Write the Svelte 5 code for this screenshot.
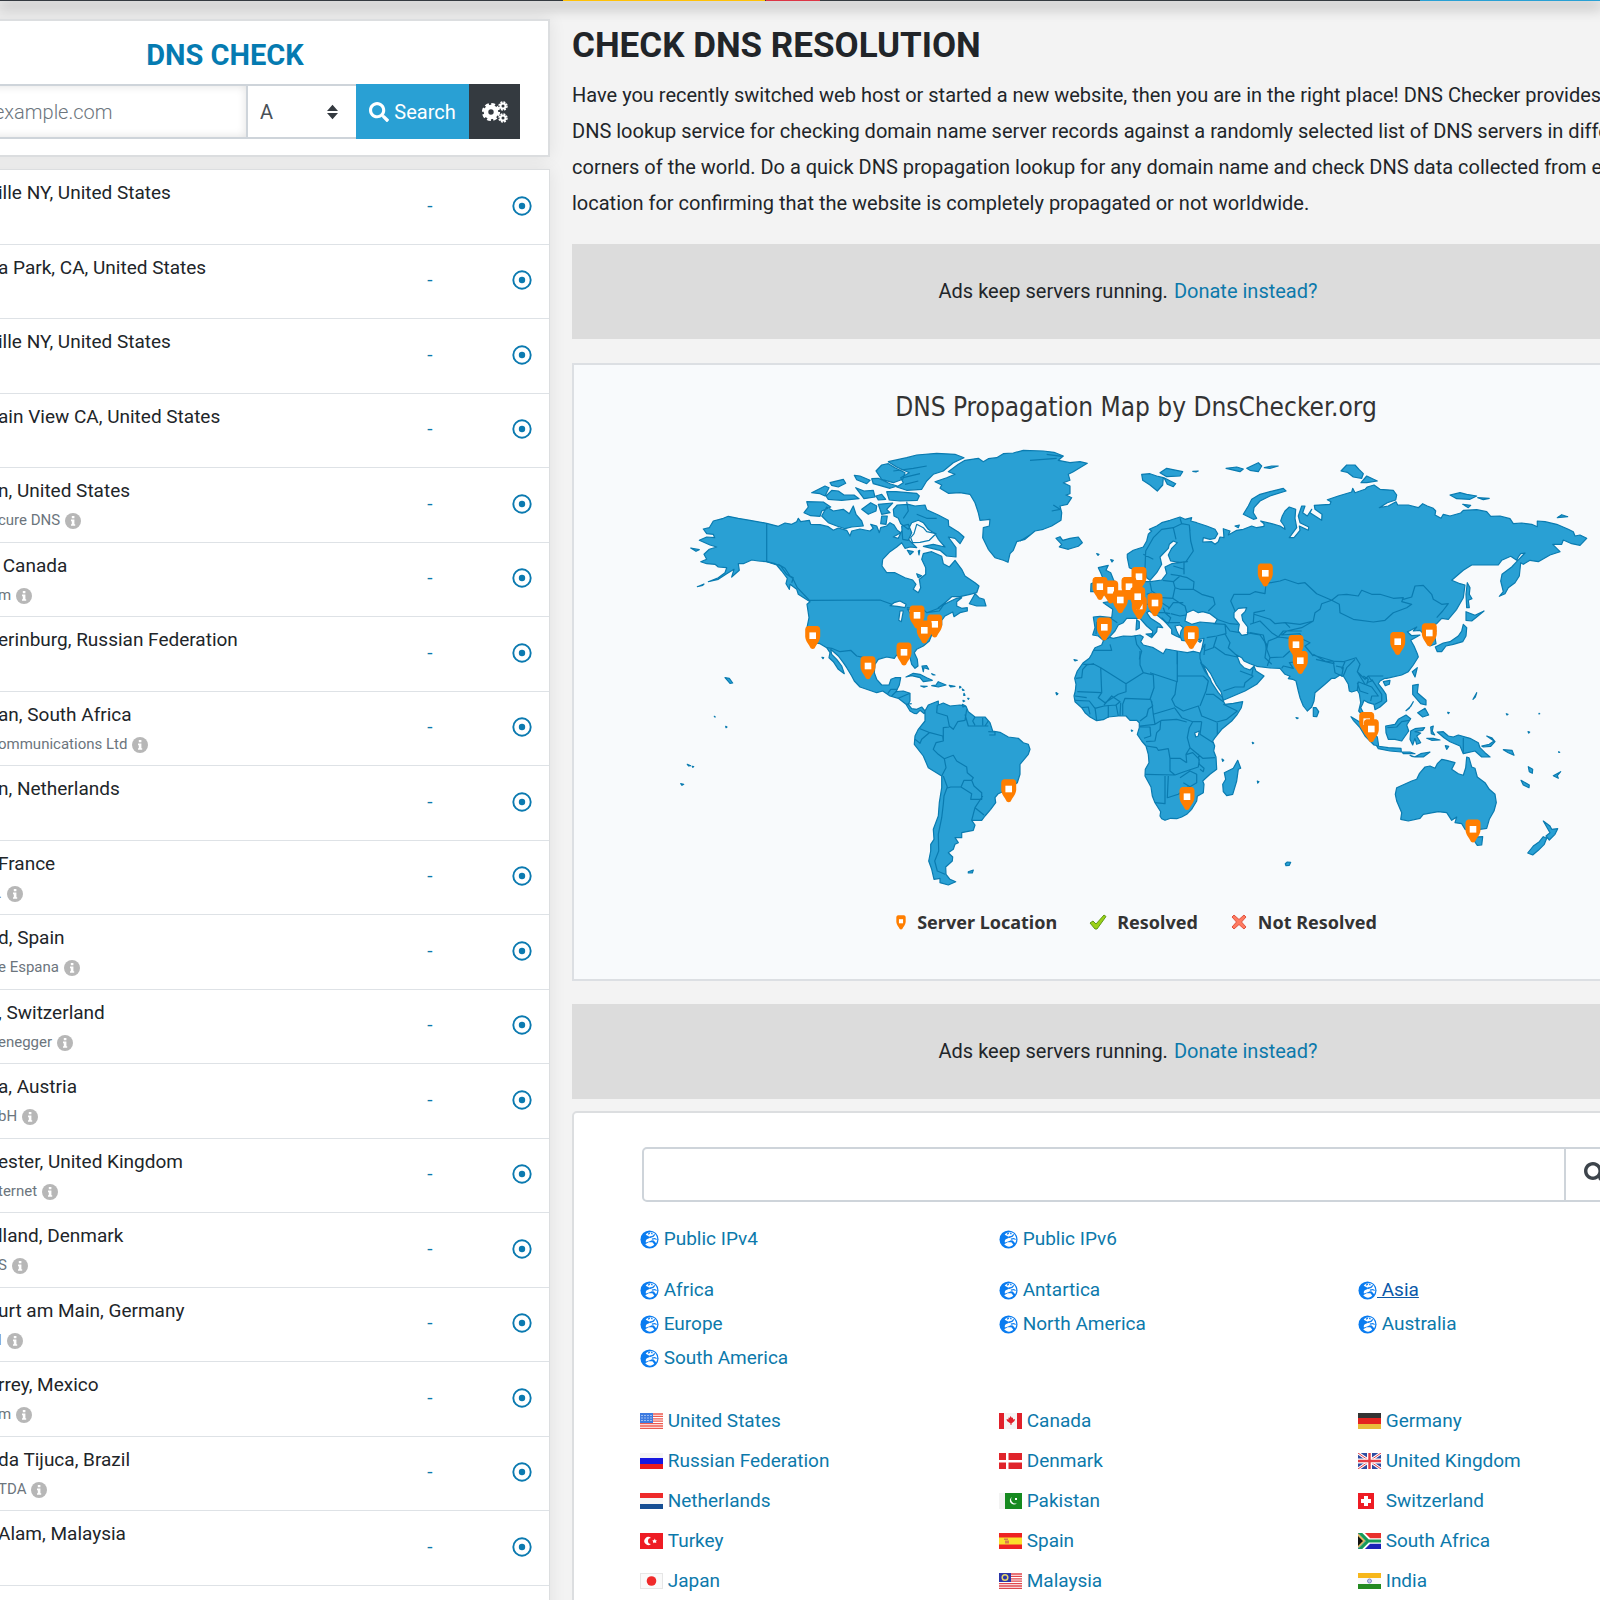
<script>
  const servers = [
    ['ille NY, United States', ''],
    ['a Park, CA, United States', ''],
    ['ille NY, United States', ''],
    ['ain View CA, United States', ''],
    ['n, United States', 'cure DNS'],
    ['\u00a0Canada', 'm'],
    ['erinburg, Russian Federation', ''],
    ['an, South Africa', 'ommunications Ltd'],
    ['n, Netherlands', ''],
    ['France', '.'],
    ['d, Spain', 'e Espana'],
    [', Switzerland', 'enegger'],
    ['a, Austria', 'bH'],
    ['ester, United Kingdom', 'ternet'],
    ['lland, Denmark', 'S'],
    ['urt am Main, Germany', 'l'],
    ['rrey, Mexico', 'm'],
    ['da Tijuca, Brazil', 'TDA'],
    ['Alam, Malaysia', '']
  ];

  const publicLists = ['Public IPv4', 'Public IPv6'];
  const regions = ['Africa', 'Antartica', 'Asia', 'Europe', 'North America', 'Australia', 'South America'];
  const countries = [
    ['United States', 'us'], ['Canada', 'ca'], ['Germany', 'de'],
    ['Russian Federation', 'ru'], ['Denmark', 'dk'], ['United Kingdom', 'gb'],
    ['Netherlands', 'nl'], ['Pakistan', 'pk'], ['Switzerland', 'ch'],
    ['Turkey', 'tr'], ['Spain', 'es'], ['South Africa', 'za'],
    ['Japan', 'jp'], ['Malaysia', 'my'], ['India', 'in']
  ];

  // The map is charted on six sheets, three units to one map unit; each has its own origin.
  const sheets = { A: [660, 430], B: [980, 430], C: [1250, 430], D: [660, 660], E: [1040, 650], F: [1300, 650] };

  // Turns "A 10,20 30,40 | B 5,5" into path data; a sheet letter holds until the next one.
  function chart(text, end = '') {
    let origin = sheets.A;
    let out = '';
    let command = 'M';
    for (const word of text.trim().split(/\s+/)) {
      if (sheets[word]) {
        origin = sheets[word];
      } else if (word === '|') {
        out += end;
        command = 'M';
      } else {
        const [x, y] = word.split(',').map(Number);
        out += command + (origin[0] + x / 3).toFixed(1) + ',' + (origin[1] + y / 3).toFixed(1);
        command = 'L';
      }
    }
    return out + end;
  }
  const outline = (text) => chart(text, 'Z');

  const land = [
    // Africa
    `B 370,630 385,618 400,622 430,615 455,616 480,612 490,618 482,632 490,642 520,650 550,668 558,654 592,660 622,665 640,661 660,666 665,690 685,735
     E 482,35 495,62 510,82 515,95 535,125 548,140 550,150 555,160 580,157 608,152 604,170 592,190 575,210 545,235 525,260 518,270 524,285 521,300 528,318 530,355 510,370 488,390 492,400 490,425 472,436 470,450 455,475 440,490 425,498 410,503 392,502 375,508 365,503 360,495 362,482 345,455 337,435 333,408 315,375 316,355 327,335 325,310 318,285 305,270 292,250 298,230 298,215 290,208 270,208 258,195 235,195 205,198 190,206 170,209 150,198 135,185 125,170 105,152 102,135 106,120 108,100 104,82 112,60 130,35 148,22 155,10
     B 338,662 345,650 365,642`,
    // Eurasia
    `B 442,380 442,370 460,358 490,348 500,330 505,310 515,300 508,295 530,285 545,275 570,268 600,258 615,265 635,260 632,270 650,275 680,285 705,295 713,308 705,322 690,325 670,320 668,333 695,332 705,340 715,332 720,318 732,320 730,293 750,300 745,312 770,298 790,295 815,285 830,290 852,286 852,278 842,270 875,278 900,285
     C 105,295 103,285 92,270 97,255 105,240 118,228 137,235 135,262 140,290 118,320 132,320 150,298 148,285 175,298 176,288 150,275 145,255 155,225 165,225 158,245 172,255 185,235 180,245 215,268 216,250 195,235 193,223 240,220 243,212 232,206 265,195 305,183 308,172 315,185 345,175 352,168 372,162 390,175 430,178 440,192 437,207 412,215 388,230 415,225 438,212 443,222 475,222 505,230 518,218 532,225 550,232 557,240 555,252 573,262 580,250 600,255 632,246 640,238 680,236 710,242 722,256 750,255 780,263 790,278 815,276 845,280 862,287 862,270 885,272 920,280 955,295 970,302 975,315 990,312 1010,322 990,343 965,338 940,327 935,340 908,340 930,362 900,372 865,392 840,388 820,400 812,395 808,435 795,455 775,470 765,488 748,496 760,482 752,450 756,430 785,408 800,392 825,366 812,368 805,378 800,388 782,376 755,388 745,402 715,402 665,402 640,418 605,448 630,458 645,462 640,500 620,535 595,565 575,562 560,578 545,585 540,598 555,620 558,638 540,645 528,632 520,608 510,598 490,600 500,588 478,600 472,602 485,614 510,612 482,628 492,645 502,668 505,678 490,702 475,722 455,732 410,742
     F 255,82 240,90 235,98 248,115 258,130 260,150 240,168 225,176 222,160 205,155 192,148 188,158 182,170 190,185 205,200 222,222 210,220 192,198 176,180 182,155 178,128 172,118 155,123 148,120 145,100 132,78 120,72 105,82 95,82 75,100 45,125 42,150 35,168 22,180 10,165 0,140
     E 775,120 768,90 758,85 745,83 750,76 735,70 720,52 690,51 650,46 630,38 612,30 605,20 590,12 600,38 612,50 630,57 642,46 648,60 672,75 650,100 615,120 580,135 550,148 543,122 528,100 512,68 500,52 485,38 480,22
     B 660,668 665,655 672,622 658,625 640,632 620,630 605,628 600,615 603,600 610,590 600,582 585,585 590,600 600,620 588,615 575,608 575,595 560,578 548,566 535,555 520,548 508,540 500,545 512,562 540,580 548,590 532,588 530,602 515,620 518,600 500,585 480,562 465,562 440,562 430,575 415,582 405,600 385,622 370,628 355,615 338,612 345,590 340,558 360,556 395,560 398,535 370,515 388,512 395,505 415,500 430,485 450,475 458,460 462,438 475,418 488,430 485,452 512,452 545,447 560,428 555,408 575,398 622,392 600,394 572,390 565,372 575,352 592,335 580,330 568,340 565,352 540,378 545,400 530,425 510,448 500,440 495,412 470,420 448,410`,
    // North and Central America
    `A 205,256 235,262 270,268 320,277 355,286 375,276 395,280 410,272 415,262 422,272 448,268 452,280 480,281 505,287 520,298 535,291 560,298 570,315 575,300 600,294 630,300 640,292 632,280 650,285 658,305 662,290 680,285 690,275 702,282 712,298 722,305 700,318 715,322 725,300 735,310 750,330 770,350 750,348 735,352 725,335 710,348 690,362 668,385 666,405 680,425 705,425 735,440 758,447 768,460 760,475 775,485 782,470 778,445 797,430 797,410 785,385 790,368 815,362 845,376 850,398 868,408 885,388 905,415 915,435 945,455 957,465 950,485 930,490 900,497 875,497 855,515 835,530 868,512 890,502 905,500 890,512 890,525 905,532 922,530 922,540 900,545 882,557 878,543 855,555 845,568 845,582 830,600 815,612 808,630 790,645 770,655 763,665 772,685 774,705 765,712 755,700 750,680 735,672 710,672 703,682 680,678 655,685 645,700 643,725 650,745 665,762 687,762 693,745
     D 705,50 722,50 718,72 708,92 730,90 750,97 750,120 745,130 755,143 770,145 785,138 795,150 793,158 780,148 770,158 762,157 750,150 738,130 715,112 690,105 668,90 650,95 600,78 583,60 575,45 560,20 550,5
     A 535,675 512,655 515,670 530,685 545,705 553,728 535,715 520,692 507,680 510,665 500,650 480,638 458,635 447,610 441,590 447,560 441,520 450,512 415,490 410,475 390,460 388,475 378,458 382,442 365,420 350,402 320,392 295,390 275,387 250,398 235,398 238,418 215,438 222,415 200,428 175,445 145,452 175,440 195,425 200,410 175,408 165,400 140,398 122,392 140,385 132,370 148,355 170,348 150,342 118,328 140,318 164,320 160,310 140,308 130,294 148,290 160,270 190,262`,
    // South America
    `D 795,150 805,132 835,120 835,132 850,126 870,135 900,132 918,136 925,152 945,168 975,168 990,185 998,210 1020,214 1045,228 1075,232 1090,245 1105,250 1110,265 1105,280 1080,310 1080,340 1072,365 1045,385 1015,398 1005,410 1007,425 992,445 975,465 965,478 935,478 945,492 940,508 905,515 905,530 885,530 895,545 885,550 880,565 865,575 878,588 877,600 857,618 858,640 870,655 887,662 865,672 840,665 840,652 822,655 815,625 806,600 812,570 812,550 822,535 820,505 835,465 838,425 845,380 845,345 805,320 790,285 763,250 765,225 775,205 795,180`,
    // Greenland
    `A 825,152 860,140 885,130 865,122 895,100 915,88 955,82 B 10,92 25,83 50,80 70,68 100,66 130,58 190,60 222,64 250,75 235,88 270,95 300,92 322,97 280,122 265,130 270,148 250,155 270,165 270,188 258,192 275,200 262,220 240,225 245,245 243,268 215,285 190,295 165,300 135,325 110,332 100,358 90,368 84,394 70,388 45,380 25,355 8,320 10,290 28,285 30,265 0,268 A 955,245 945,215 930,190 900,185 865,187 840,172 845,162`,
    // Canadian Arctic
    `A 440,212 490,213 512,228 485,240 480,256 452,254 432,245 445,228 | 500,228 520,240 550,235 568,248 580,225 588,250 605,270 610,285 575,288 555,293 530,285 505,275 485,255 | 605,235 632,215 650,225 648,240 625,250 | 655,220 698,216 680,235 690,245 665,250 | 665,255 682,255 678,280 662,278 | 700,235 712,222 745,220 765,225 795,222 800,236 835,252 865,268 866,285 895,303 912,318 900,338 885,322 865,318 888,350 888,378 860,375 840,358 790,346 820,340 855,348 835,325 825,308 805,295 790,275 775,268 755,275 745,295 722,278 715,262 702,255 | 725,285 745,280 755,305 745,328 728,325 | 680,182 708,182 770,187 778,195 772,208 720,210 688,207 | 648,120 665,102 685,98 705,110 735,125 728,145 700,155 665,145 | 685,92 740,80 770,72 830,67 885,70 912,80 880,95 850,120 820,130 800,150 785,175 740,178 710,168 730,155 722,140 748,125 710,108 | 583,133 600,135 630,148 620,158 590,146 | 635,143 655,142 690,158 712,165 690,172 640,158 | 455,185 495,165 507,170 495,195 480,188 | 510,155 550,145 557,157 535,168 515,163 | 498,195 515,178 535,180 552,192 582,192 597,203 545,208 505,205 | 587,170 612,180 640,178 645,198 612,203 | 648,195 665,190 677,205 655,207 | 742,358 760,362 750,371 | 775,360 779,358 777,372 | 770,428 785,434 775,440 | 945,488 957,500 972,505 978,525 950,525 928,518 | 92,351 118,356 108,361 | 112,467 132,459 128,463 | 195,740 208,742 218,756 210,757 | 486,679 491,680 489,683`,
    // Caribbean and Pacific islets
    `D 738,48 760,37 780,40 800,50 817,58 790,62 780,50 755,44 | 815,74 828,72 835,62 858,72 835,78 | 868,73 885,76 872,78 | 782,75 802,76 792,79 | 786,15 800,14 806,25 792,20 790,32 | 815,38 825,42 820,42 | 899,76 903,79 899,81 | 907,84 912,88 908,88 | 912,97 915,103 911,103 | 923,112 927,112 925,115 | 909,118 914,120 910,122 | 907,130 916,134 909,138 | 163,166 166,168 164,168 | 197,196 201,198 198,200 | 82,310 92,314 86,315 | 97,316 101,317 98,319 | 62,368 71,370 66,373 | 925,632 940,627 937,636 925,636 | 1188,95 1192,98 1190,101`,
    // North Atlantic and Arctic Ocean
    `B 228,322 240,317 248,328 270,322 295,318 307,335 295,346 265,355 238,348 245,340 | 355,410 385,403 378,418 392,425 400,445 410,465 412,485 375,494 385,482 370,475 382,460 368,440 362,425 | 333,458 352,450 358,470 352,482 332,482 | 350,368 357,370 354,373 | 392,386 400,388 396,393 | 485,130 510,128 530,135 550,140 548,162 532,180 510,162 488,148 | 540,125 560,112 608,122 600,135 560,137 | 552,140 587,158 580,167 562,160 | 638,121 655,120 648,123 | 738,112 770,108 790,114 780,122 | 800,112 835,95 845,105 835,122 810,118 | 853,110 875,105 895,105 870,112 | 790,250 805,225 815,205 840,190 C 60,182 100,172 108,180 60,195 30,210 12,230 10,245 20,262 10,265 | 273,120 290,102 315,102 327,115 340,128 335,142 310,138 292,124 | 333,155 350,135 382,150 350,155 | 600,192 630,185 650,190 680,195 660,205 620,203 | 683,200 718,202 700,206 | 638,220 662,223 655,230 | 922,260 935,251 953,257 | B 765,285 778,282 775,290 | 470,566 478,572 478,592 468,597 | 498,609 518,608 512,618 | 282,686 292,688 285,690 | 655,630 665,628 660,634`,
    // Japan, Sakhalin and the western Pacific
    `C 652,455 660,470 658,490 666,503 655,508 658,530 650,530 648,490 | 648,542 675,553 702,540 680,558 665,570 648,568 | 640,580 650,590 648,615 638,632 610,640 588,645 575,662 562,662 556,648 580,636 600,632 625,615 635,600 | 487,722 502,710 495,738 | F 250,92 270,88 268,100 256,104 | 40,170 48,170 56,182 50,197 40,196`,
    // South-east Asia
    `F 153,197 178,212 205,235 232,258 236,285 222,282 195,255 180,230 160,208 | 230,285 265,290 303,292 304,303 270,300 235,293 | 306,303 330,303 345,308 310,308 | 345,317 362,308 390,303 370,318 | 330,313 345,318 335,316 | 257,225 285,220 295,205 318,192 332,203 320,222 326,240 305,270 285,265 265,265 258,245 | 332,240 345,233 374,230 368,238 345,242 362,246 350,255 362,275 350,280 345,262 338,282 330,265 | 392,228 400,225 397,240 404,252 394,248 | 380,262 400,262 420,267 395,268 | 412,243 430,242 445,255 460,258 475,252 510,262 535,275 540,290 555,305 570,318 545,318 525,300 490,308 480,285 450,272 432,260 | 545,285 568,280 582,270 560,255 575,260 585,272 572,286 550,288 | 436,284 446,286 440,295 | 610,296 636,298 642,313 625,305 | 685,347 698,355 697,367 688,362 | 663,388 688,402 687,410 670,402 | 760,374 782,362 772,374 775,382 | 338,103 355,100 352,125 378,148 378,162 362,158 338,130 | 353,185 375,172 386,192 368,198 | 340,152 328,172 318,179 333,165 | 443,184 448,185 445,188 | 619,188 624,190 621,192 | 684,242 689,243 686,246 | 519,145 530,125 526,138 | 717,187 719,188 717,189 | 776,302 779,304 776,304`,
    // Australia and New Zealand
    `F 290,410 335,390 350,385 358,368 375,348 390,345 405,352 412,338 425,325 440,328 465,335 455,355 475,368 490,373 497,350 500,318 507,320 515,348 525,352 532,378 555,395 568,415 585,430 589,455 582,480 568,505 560,532 540,535 515,540 495,535 485,518 465,515 470,498 455,508 440,485 415,482 370,490 360,502 325,510 302,505 305,485 290,450 286,430 | 525,558 548,557 545,582 532,583 523,570 | 730,510 750,525 755,535 773,533 765,550 748,567 738,555 750,545 | 730,557 740,562 733,580 715,598 698,612 683,606 700,585 718,572`,
    // Madagascar and the Indian Ocean
    `E 593,328 602,352 595,355 590,390 578,430 560,434 550,422 548,400 557,385 553,365 580,352 | 736,638 742,633 752,634 748,643 738,644 | 768,200 775,201 771,203 | 637,274 641,276 638,278 | 652,390 657,392 653,396 | 546,324 551,328 548,331 | 274,237 278,239 275,241 | 49,125 54,128 51,131`
  ].map(outline);

  const water = [
    'A 690,524 702,515 720,510 738,520 735,530 712,526 | 720,540 730,540 724,572 716,568 | 742,534 772,545 775,565 752,550 | 758,335 752,320 762,308 770,280 790,290 800,302 828,308 808,328 780,334',
    'B 620,545 640,537 655,545 668,542 690,548 712,565 705,577 660,573 635,580 615,570 | 762,545 775,532 800,530 795,542 785,552 788,568 803,588 803,610 785,613 775,600 778,580 762,560',
    'E 464,246 478,240 475,255 467,258'
  ].map(outline);

  const borders = [
    'A 320,277 320,392 345,398 362,405 380,430 398,442 412,470 450,510 | 450,508 660,507 695,520 | 740,530 790,535 800,545 838,540 855,515 | 800,545 840,530 | 500,650 515,652 540,662 572,658 590,675 612,680 618,692 640,700 | 355,400 375,412 390,435 400,440 395,455 | 740,212 745,240 730,262 | 770,250 800,262 830,262 | 700,120 760,112 800,105 | 730,140 780,128 | 735,160 775,150',
    'D 683,98 692,85 712,85 | 708,92 695,105 | 715,112 750,97 | 738,130 755,128',
    'D 850,345 862,378 852,405 850,430 845,470 835,520 836,570 824,600 832,630 855,640 | 845,345 858,320 853,293 880,283 890,300 920,318 922,335 940,350 935,358 912,358 903,378 872,378 860,382 | 935,358 942,375 965,395 965,415 932,415 935,398 903,378 | 968,405 945,440 972,462 | 945,440 935,478 | 853,293 835,280 820,265 828,245 850,240 848,225 810,215 780,203 | 765,235 780,247 785,235 808,215 | 850,240 850,200 868,198 | 832,132 830,155 862,165 868,195 880,205 893,182 915,178 920,145 | 915,160 925,195 985,195 | 945,168 938,180 945,193 | 968,170 968,193 | 985,180 975,195 | 985,212 1005,213 1005,222 988,222',
    'E 108,82 125,80 128,55 140,42 162,38 | 130,40 162,40 | 162,40 182,50 258,98 310,65 300,42 300,0 | 182,50 185,125 112,122 | 185,125 175,140 195,155 235,130 258,122 258,98 | 310,65 340,72 342,110 330,145 255,142 248,160 248,193 | 330,65 412,92 412,0 | 412,75 490,75 | 410,92 405,130 395,145 405,165 | 332,145 338,165 325,175 320,195 300,210 | 205,162 205,200 | 228,160 235,195 | 242,155 240,195 | 165,170 170,208 | 192,162 215,135 240,152 228,162 192,165 165,172 148,150 105,148 | 105,135 140,140 | 125,170 145,168 150,190 | 335,150 340,190 405,170 | 340,190 345,220 300,225 | 345,220 365,208 410,205 440,213 | 405,165 430,180 475,165 485,195 530,213 560,205 592,180 550,160 | 490,75 505,90 498,120 480,165 | 498,130 520,130 550,152 | 405,172 425,200 458,212 485,212 | 485,212 480,250 520,275 | 532,215 532,250 | 458,212 448,230 442,260 450,290 438,310 440,335 | 320,285 350,290 355,298 385,293 390,322 420,322 440,335 | 318,272 345,270 350,245 360,235 362,210 | 300,228 330,228 332,255 312,262 | 315,370 405,372 | 390,322 390,360 405,372 432,362 475,348 478,325 458,305 440,310 | 450,290 488,322 525,320 | 475,308 478,340 492,352 490,362 480,355 | 420,380 450,360 470,370 470,395 450,407 430,395 | 385,375 382,440 415,430 445,407 | 375,375 375,458 345,455',
    'E 550,120 585,108 612,108 615,95 640,75 | 640,48 635,75 | 640,75 600,60',
    'B 495,412 497,360 520,320 545,295 580,290 588,325 | 580,290 605,278 628,282 630,300 | 605,278 600,262 | 628,282 632,330 640,360 618,392 | 580,405 612,415 | 572,430 605,435 | 612,392 612,430 | 510,455 515,480 545,500 578,502 585,470 580,452 548,448 | 580,452 600,435 622,440 642,452 640,475 600,475 585,470 | 640,475 665,490 700,500 705,520 685,540 | 578,502 598,515 615,525 620,545 | 565,535 580,515 610,515 | 572,548 600,555 618,552 | 440,490 465,505 462,525 480,555 | 515,485 500,490 | 500,520 545,515 568,530 | 390,560 412,575 | 350,572 348,610 | 520,545 555,545 572,560 565,578 | 545,560 560,575 600,575 | 570,548 555,545 550,530 | 340,658 395,658 390,640 | 465,614 470,640 485,660 478,685 | 592,660 592,700 | 700,578 735,580 738,608 710,615 680,620 | 710,618 700,650 672,660 | 735,608 750,635 745,650 772,675 | 700,645 735,670 772,678 | 710,565 750,578 775,580 | 735,580 750,600 780,605 | 765,540 752,510 762,490 810,490 825,482 855,488 858,455 | 665,655 675,640 672,672 | 800,605 840,612 860,640 855,680 875,700 | 490,370 520,385 | 120,330 150,312 | 150,88 230,82 | 200,70 245,76 | 220,222 240,235 215,240',
    'C 45,458 90,450 105,445 145,458 165,455 200,488 245,508 | 10,575 12,545 45,538 | 12,550 60,565 75,578 105,575 120,590 | 105,575 150,580 190,570 195,545 210,535 215,518 245,508 | 0,580 30,570 65,605 85,618 | 245,508 265,492 290,490 325,495 335,478 365,490 390,490 430,502 460,500 455,512 485,520 470,530 430,545 405,568 370,573 310,565 270,545 268,520 245,508 | 460,505 485,498 495,465 520,463 545,490 550,505 575,520 595,518 578,540 560,560 | 190,570 155,590 110,600 95,612 150,608 158,625 180,635 165,645 190,675 | 85,618 100,600 155,600 | 50,655 55,630 85,618 120,622 | 190,670 225,690 280,692 318,680 330,700 322,722 345,745 355,735 400,735 | 0,605 40,612 50,655 60,680 52,705 | 60,680 100,678 120,660 | 95,712 100,705 130,712 118,695 160,690 | 188,672 250,690 252,698 198,685 | 250,692 255,725 275,735 280,710 258,705 | 285,692 275,715 | 322,722 345,760 | 535,600 560,600',
    'F 175,92 190,98 215,108 235,135 215,135 212,150 | 172,95 180,120 205,128 | 205,75 215,90 200,95 | 215,85 245,130 245,150 225,160 | 190,75 205,85 200,100 | 130,75 140,50 165,25 | 172,118 175,92 | 490,260 490,305 | 262,230 290,228 305,212 328,208'
  ].map((text) => chart(text));

  const pins = chart(`A 458,614 771,553 824,580 793,598 732,664 624,705 B 477,437 360,467 392,478 447,467 421,507 478,525 473,497 525,516 373,589 634,614 856,427
    C 138,641 151,689 443,632 538,606 D 1046,384 E 441,437 F 200,212 214,234 519,535`).slice(1).split('L');

  let domain = $state('');
  let kind = $state('A');
  let query = $state('');
</script>

{#snippet magnifier()}
  <svg class="glyph" viewBox="0 0 512 512" aria-hidden="true"><path fill="currentColor" d="M505 442.700 405.300 343c-4.500-4.500-10.600-7-17-7H372c27.600-35.300 44-79.700 44-128C416 93.100 322.900 0 208 0S0 93.100 0 208s93.100 208 208 208c48.300 0 92.700-16.400 128-44v16.300c0 6.400 2.500 12.500 7 17l99.700 99.700c9.400 9.400 24.600 9.400 33.900 0l28.300-28.300c9.400-9.400 9.400-24.600.1-34zM208 336c-70.700 0-128-57.200-128-128 0-70.700 57.200-128 128-128 70.700 0 128 57.200 128 128 0 70.700-57.200 128-128 128z" /></svg>
{/snippet}

{#snippet globe()}
  <svg class="globe" viewBox="0 0 20 20" aria-hidden="true">
    <circle cx="10" cy="10" r="9.500" fill="#0a7cf0" />
    <path fill="#fff" d="M6 5C8.500 1.800 14 1.600 16.200 4.500 18.800 8 18.600 11.500 17 14l-2.500-3-2-.300-3 1.500-3.300 1C5.500 11 7 9.300 9 9l3.500-3L10 7.200z" />
    <path fill="#fff" d="M5.500 15l3.500-2 4-.200 2 2.500C12.500 18.300 8.500 18.300 5.500 15z" />
    <path fill="none" stroke="#0a7cf0" stroke-width="1.300" d="M8.500 4.500l1.800-1.200M10 8l4-1.500 1.500-2M12.500 9.500l3-.500 2 1M12 3l1 1.500" />
  </svg>
{/snippet}

{#snippet pinShape()}
  <path fill="#ff7e00" d="M-5-9.700H5q2.500 .7 2.500 3.200V1C7 6 4 8 2 12.500Q0 14-2 12.500C-4 8-7 6-7.500 1v-7.500q0-2.500 2.500-3.200z" />
  <rect x="-3.300" y="-3.300" width="6.600" height="6.600" fill="#fff" />
{/snippet}

{#snippet ad()}
  <aside class="ad">Ads keep servers running. <a href="#donate">Donate instead?</a></aside>
{/snippet}

{#snippet flag(code)}
  <svg class="flag" viewBox="0 0 23 16" aria-hidden="true">
    {#if code === 'us'}
      <path fill="#fff" d="M0 0h23v16H0z" /><path stroke="#ee5a50" stroke-width="1.300" d="M0 1h23M0 3.400h23M0 5.800h23M0 8.200h23M0 10.600h23M0 13h23M0 15.300h23" /><path fill="#3d7be0" d="M0 0h13v10H0z" /><path stroke="#fff" stroke-dasharray="1 2" d="M1.500 2.500h11M1.500 5h11M1.500 7.500h11" />
    {:else if code === 'ca'}
      <path fill="#f4f4f4" d="M0 0h23v16H0z" /><path fill="#e0202a" d="M0 0h5v16H0zM18 0h5v16h-5zM11.500 3l1.500 2 1-.5v2l2-.5-.500 2-3 2.500v1.500h-1V10.500L8 8l-.500-2 2 .5v-2l1 .5z" />
    {:else if code === 'de'}
      <path fill="#333" d="M0 0h23v6H0z" /><path fill="#e42320" d="M0 5h23v6H0z" /><path fill="#e9bd3c" d="M0 11h23v5H0z" />
    {:else if code === 'ru'}
      <path fill="#f5f5f5" d="M0 0h23v5H0z" /><path fill="#1818e0" d="M0 5h23v6H0z" /><path fill="#ee1c1c" d="M0 11h23v5H0z" />
    {:else if code === 'dk'}
      <path fill="#e0242b" d="M0 0h23v16H0z" /><path fill="#fff" d="M7 0h2.500v16H7zM0 7h23v2.500H0z" />
    {:else if code === 'gb'}
      <path fill="#2f4ba0" d="M0 0h23v16H0z" /><path stroke="#fff" stroke-width="3" d="M0 0l23 16M23 0L0 16" /><path stroke="#e43d45" d="M0 0l23 16M23 0L0 16" /><path fill="#fff" d="M9 0h5v16H9zM0 5.500h23v5H0z" /><path fill="#e43d45" d="M10.300 0h2.400v16h-2.400zM0 6.800h23v2.400H0z" />
    {:else if code === 'nl'}
      <path fill="#ee2a2a" d="M0 0h23v6H0z" /><path fill="#f7f7f7" d="M0 5h23v6H0z" /><path fill="#174f94" d="M0 11h23v5H0z" />
    {:else if code === 'pk'}
      <path fill="#f3f3f3" d="M0 0h6v16H0z" /><path fill="#168a20" d="M6 0h17v16H6z" /><path fill="#fff" d="M13 4a4 4 0 1 0 5 6 4 4 0 0 1-5-6zM16 5h2v2h-2z" />
    {:else if code === 'ch'}
      <path fill="#ee1c24" d="M0 0h16v16H0z" /><path fill="#fff" d="M6 3h4v3h3v4h-3v3H6v-3H3V6h3z" />
    {:else if code === 'tr'}
      <path fill="#ee1c24" d="M0 0h23v16H0z" /><path fill="#fff" d="M11 5a4 4 0 1 0 0 6 3 3 0 1 1 0-6zM12.500 7l1.500.200.800-1.700.700 1.700 1.500.300-1 1 .3 1.500-1.500-.500-1.300.700z" />
    {:else if code === 'es'}
      <path fill="#ee2222" d="M0 0h23v16H0z" /><path fill="#fbe02d" d="M0 4.500h23v7H0z" /><path fill="#d77c4c" d="M5 5.500h4v1.500H5zM6 7.500h4v3H6z" />
    {:else if code === 'za'}
      <path fill="#e8302c" d="M0 0h23v8H0z" /><path fill="#1a22b8" d="M0 8h23v8H0z" /><path fill="none" stroke="#fff" stroke-width="5.500" d="M2-1l9 9-9 9M11 8h12" /><path fill="#111" d="M0 2l6 6-6 6z" /><path fill="none" stroke="#e6c35a" stroke-width="1.500" d="M0 2l6 6-6 6" /><path fill="none" stroke="#169a58" stroke-width="3.200" d="M1-1l9 9-9 9M9 8h14" />
    {:else if code === 'jp'}
      <path fill="#e6e6e6" d="M0 0h23v16H0z" /><path fill="#fafafa" d="M1 1h21v14H1z" /><circle cx="11.500" cy="8" r="4.800" fill="#f02a2a" />
    {:else if code === 'my'}
      <path fill="#fff" d="M0 0h23v16H0z" /><path stroke="#e0464c" stroke-width="1.300" d="M0 1h23M0 3.400h23M0 5.800h23M0 8.200h23M0 10.600h23M0 13h23M0 15.300h23" /><path fill="#2b35a8" d="M0 0h12v9H0z" /><circle cx="6" cy="4.500" r="2.800" fill="none" stroke="#e4d56a" stroke-width="1.500" />
    {:else}
      <path fill="#f7b71c" d="M0 0h23v6H0z" /><path fill="#fafafa" d="M0 5h23v6H0z" /><path fill="#248a22" d="M0 11h23v5H0z" /><circle cx="11.500" cy="8" r="2" fill="#c5c9ea" stroke="#7d86c8" />
    {/if}
  </svg>
{/snippet}

<div class="page">
  <div class="strip"><i></i><i class="yellow"></i><i></i><i class="red"></i><i></i><i class="blue"></i></div>

  <div class="columns">
    <div class="left">
      <form class="panel check" onsubmit={(e) => e.preventDefault()}>
        <h2>DNS CHECK</h2>
        <div class="group">
          <input class="domain" type="text" placeholder="example.com" aria-label="Domain name" bind:value={domain} />
          <div class="pick">
            <select aria-label="Record type" bind:value={kind}><option>A</option><option>AAAA</option><option>CNAME</option><option>MX</option></select>
            <svg viewBox="0 0 12 16" aria-hidden="true"><path fill="#343a40" d="M6 0l6 7H0zM0 9h12l-6 7z" /></svg>
          </div>
          <button class="search">{@render magnifier()} Search</button>
          <button class="cogs" type="button" aria-label="Settings">
            <svg viewBox="0 0 26 22" aria-hidden="true">
              <g fill="none" stroke="#fff">
                <circle cx="9" cy="11" r="5" stroke-width="4.600" />
                <circle cx="9" cy="11" r="7.800" stroke-width="2.600" stroke-dasharray="3.800 2.330" />
                <circle cx="21" cy="5" r="2.500" stroke-width="2" />
                <circle cx="21" cy="5" r="4" stroke-width="1.400" stroke-dasharray="2 1.140" />
                <circle cx="21" cy="17" r="2.500" stroke-width="2" />
                <circle cx="21" cy="17" r="4" stroke-width="1.400" stroke-dasharray="2 1.140" />
              </g>
            </svg>
          </button>
        </div>
      </form>

      <table class="servers">
        <tbody>
          {#each servers as [place, host]}
            <tr>
              <td class="where">
                <div>{place}</div>
                {#if host}
                  <small>{host}
                    <svg viewBox="0 0 16 16" aria-hidden="true"><circle cx="8" cy="8" r="8" fill="#b7b7b7" /><path fill="#fff" d="M6.800 3h2.600v2.300H6.800zM6 6.600h3.400v4.600h.8v1.600H6v-1.600h.8V8.200H6z" /></svg>
                  </small>
                {/if}
              </td>
              <td class="result">-</td>
              <td class="state"><svg viewBox="0 0 20 20" aria-hidden="true"><circle cx="10" cy="10" r="8.700" fill="none" stroke="#0b7ab0" stroke-width="1.900" /><circle cx="10" cy="10" r="3.200" fill="#0b7ab0" /></svg></td>
            </tr>
          {/each}
        </tbody>
        <tfoot><tr><td colspan="3"></td></tr></tfoot>
      </table>
    </div>

    <main>
      <h1>CHECK DNS RESOLUTION</h1>
      <p>
        Have you recently switched web host or started a new website, then you are in the right place! DNS Checker provides free
        DNS lookup service for checking domain name server records against a randomly selected list of DNS servers in different
        corners of the world. Do a quick DNS propagation lookup for any domain name and check DNS data collected from every
        location for confirming that the website is completely propagated or not worldwide.
      </p>

      {@render ad()}

      <section class="map">
        <h3>DNS Propagation Map by DnsChecker.org</h3>
        <svg class="world" viewBox="574 439 1124 450" role="img" aria-label="World map of server locations">
          <g fill="#29a0d4" stroke="#0a7bb0" stroke-width="1.200" stroke-linejoin="round">
            {#each land as d}<path {d} />{/each}
          </g>
          <g fill="#f8fafc" stroke="#0a7bb0" stroke-width="1.200" stroke-linejoin="round">
            {#each water as d}<path {d} />{/each}
          </g>
          <g fill="none" stroke="#0a7bb0" stroke-width="1.200" stroke-linejoin="round">
            {#each borders as d}<path {d} />{/each}
          </g>
          {#each pins as spot}
            <g transform="translate({spot})">{@render pinShape()}</g>
          {/each}
        </svg>
        <ul class="legend">
          <li><svg viewBox="-8 -10 16 24" aria-hidden="true">{@render pinShape()}</svg>Server Location</li>
          <li>
            <svg class="mark" viewBox="0 0 18 16" aria-hidden="true"><path fill="#9bd117" stroke="#5f9a18" d="M1 9l3-2 3 3 8-9 2 1.500L8 15H6z" /></svg>Resolved
          </li>
          <li>
            <svg class="mark" viewBox="0 0 16 16" aria-hidden="true"><path fill="#ff7a60" stroke="#df5340" d="M1 3l2-2 5 4.500L13 1l2 2-4.500 5 4.500 5-2 2-5-4.500L3 15l-2-2 4.500-5z" /></svg>Not Resolved
          </li>
        </ul>
      </section>

      {@render ad()}

      <section class="browse">
        <form class="find" onsubmit={(e) => e.preventDefault()}>
          <input type="text" aria-label="Find DNS servers" bind:value={query} />
          <button aria-label="Find">{@render magnifier()}</button>
        </form>
        <ul class="links">
          {#each publicLists as name}<li><a href="#list">{@render globe()}<span>&nbsp;{name}</span></a></li>{/each}
        </ul>
        <ul class="links">
          {#each regions as name}<li><a href="#region" class:active={name === 'Asia'}>{@render globe()}<span>&nbsp;{name}</span></a></li>{/each}
        </ul>
        <ul class="links nations">
          {#each countries as [name, code]}<li><a href="#country">{@render flag(code)}<span>&nbsp;{name}</span></a></li>{/each}
        </ul>
      </section>
    </main>
  </div>
</div>

<style>
  :global(body) { background: #f3f3f3; }
  .page, .page * { box-sizing: border-box; }
  .page {
    height: 100vh;
    overflow: hidden;
    font: 20px/30px Roboto, sans-serif;
    color: #212529;
  }
  .strip {
    display: grid;
    grid-template-columns: 563fr 202fr 1fr 54fr 600fr 180fr;
    height: 1px;
    box-shadow: 0 4px 14px 3px rgba(0, 0, 0, 0.28);
  }
  .strip i { background: #343a40; }
  .strip .yellow { background: #ffc107; }
  .strip .red { background: #dc3545; }
  .strip .blue { background: #29a0d4; }

  .columns {
    display: grid;
    grid-template-columns: minmax(0, 650fr) minmax(0, 1128fr);
    gap: 22px;
    margin: 0 -100px;
    padding-top: 18px;
  }
  h1, h2, h3, p, ul { margin: 0; padding: 0; }
  ul { list-style: none; }
  a { color: #0c79ab; text-decoration: none; }
  button, input, select { font: inherit; margin: 0; border-radius: 0; }
  button { cursor: pointer; padding: 0; border: 0; }

  .panel {
    background: #fff;
    border: 2px solid #dcdee0;
    box-shadow: 0 0 16px rgba(0, 0, 0, 0.08);
  }
  .check { padding: 16px 28px; }
  .check h2 {
    font-size: 29px;
    line-height: 37px;
    font-weight: 700;
    color: #057bb1;
    text-align: center;
    margin-bottom: 10px;
  }
  .group { display: flex; height: 55px; }
  .domain {
    flex: 1;
    min-width: 0;
    padding: 0 0 0 62px;
    border: 2px solid #ced4da;
    box-shadow: inset 0 0 10px rgba(0, 0, 0, 0.12);
    background: #fff;
    font-weight: 300;
  }
  .domain::placeholder { color: #6c757d; opacity: 1; }
  .pick { position: relative; width: 108px; }
  .pick select {
    width: 100%;
    height: 100%;
    padding: 0 12px;
    appearance: none;
    background: #fff;
    border: solid #ced4da;
    border-width: 2px 0;
    color: #495057;
  }
  .pick svg { position: absolute; right: 18px; top: 20px; width: 11px; height: 16px; pointer-events: none; }
  .search {
    display: flex;
    align-items: center;
    justify-content: center;
    gap: 5px;
    width: 113px;
    background: #29a0d4;
    color: #fff;
  }
  .glyph { width: 20px; height: 20px; }
  .cogs { width: 51px; background: #343a40; display: grid; place-items: center; }
  .cogs svg { width: 26px; height: 22px; }

  .servers {
    width: 100%;
    margin-top: 12px;
    table-layout: fixed;
    border-collapse: separate;
    border-spacing: 0;
    background: #fff;
    border: 1px solid #dcdee0;
    box-shadow: 0 0 16px rgba(0, 0, 0, 0.08);
    font-size: 19px;
  }
  .servers tr { height: 75px; }
  .servers tr:nth-child(even) { height: 74px; }
  .servers td { padding: 0 0 3px; border-bottom: 1px solid #dee2e6; vertical-align: middle; }
  .servers .where { padding: 8px 0 0 97px; vertical-align: top; white-space: nowrap; }
  .where small { display: flex; align-items: center; gap: 5px; font-size: 15px; line-height: 29px; color: #6c757d; }
  .where svg { width: 16px; height: 16px; }
  .servers .result { width: 130px; text-align: center; color: #0c79ab; }
  .servers .state { width: 54px; text-align: center; }
  .state svg { display: block; width: 20px; height: 20px; margin: 0 auto; }

  h1 { font-size: 35px; line-height: 54px; font-weight: 700; margin-bottom: 4px; }
  p { line-height: 36px; padding-right: 28px; margin-bottom: 23px; }
  .ad {
    display: flex;
    align-items: center;
    justify-content: center;
    gap: 6px;
    height: 95px;
    padding: 0 16px 2px 0;
    background: #dcdcdc;
  }
  .map {
    margin: 24px 0 23px;
    padding: 24px 0 45px;
    border: 2px solid #dcdfe3;
    background: #f8fafc;
  }
  .map h3 {
    font: 400 26px/36px 'DejaVu Sans Condensed', 'Noto Sans', sans-serif;
    color: #333;
    text-align: center;
    margin-bottom: 15px;
  }
  .world { display: block; width: 100%; }
  .legend {
    display: flex;
    justify-content: center;
    gap: 32px;
    margin-top: 20px;
    font: 700 18px/24px 'Noto Sans', sans-serif;
    color: #333;
  }
  .legend li { display: flex; align-items: center; gap: 10px; }
  .legend svg { width: 12px; height: 15px; }
  .legend .mark { width: 18px; height: 16px; }

  .browse {
    margin-top: 12px;
    padding: 34px 68px 40px;
    background: #fff;
    border: 2px solid #dcdee0;
    border-radius: 5px;
  }
  .find { display: flex; height: 55px; margin-bottom: 20px; }
  .find input {
    flex: 1;
    min-width: 0;
    padding: 0 16px;
    border: 2px solid #ced4da;
    border-radius: 5px 0 0 5px;
    background: #fff;
  }
  .find button {
    width: 64px;
    padding: 0 0 4px 18px;
    text-align: left;
    border: solid #ced4da;
    border-width: 2px 2px 2px 0;
    background: #fff;
    color: #3d444b;
  }
  .find .glyph { display: block; width: 22px; height: 22px; }
  .links {
    display: grid;
    grid-template-columns: repeat(3, 359px);
    margin: 0 0 17px -2px;
    font-size: 19px;
    line-height: 34px;
  }
  .links a { display: flex; align-items: center; }
  .globe { width: 19px; height: 19px; }
  .active span { color: #0a58a8; text-decoration: underline; }
  .nations { margin-top: 26px; line-height: 40px; }
  .flag { width: 23px; height: 16px; }
</style>
